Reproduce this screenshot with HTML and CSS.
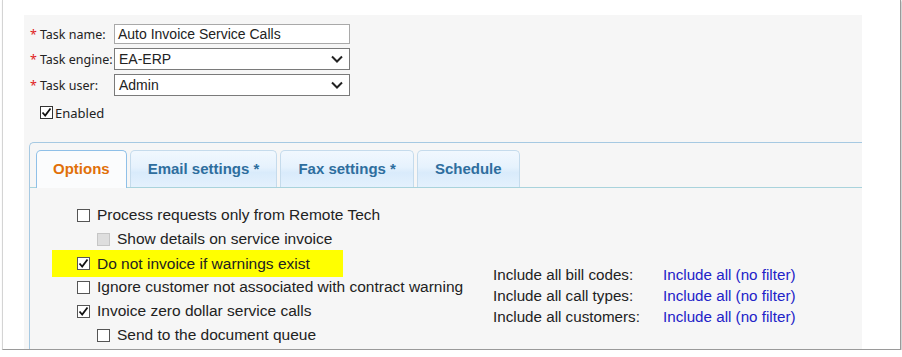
FILE: index.html
```html
<!DOCTYPE html>
<html lang="en">
<head>
    <meta charset="UTF-8">
    <title>Scheduled task</title>
    <link rel="stylesheet" href="styles.css">
</head>
<body>
    <div class="frame">
        <div class="panel">
            <div class="task-form">
                <label class="field-label"><span class="req">*</span> Task name:</label>
                <div class="text-input">Auto Invoice Service Calls</div>

                <label class="field-label"><span class="req">*</span> Task engine:</label>
                <div class="select-box">
                    <span>EA-ERP</span>
                    <svg width="12" height="8" viewBox="0 0 12 8"><path d="M1 1.5 6 6.5 11 1.5" fill="none" stroke="#222" stroke-width="2"/></svg>
                </div>

                <label class="field-label"><span class="req">*</span> Task user:</label>
                <div class="select-box">
                    <span>Admin</span>
                    <svg width="12" height="8" viewBox="0 0 12 8"><path d="M1 1.5 6 6.5 11 1.5" fill="none" stroke="#222" stroke-width="2"/></svg>
                </div>
            </div>

            <div class="enabled-row">
                <span class="cb checked"><svg width="11" height="11" viewBox="0 0 11 11"><path d="M1.5 5.5 4.2 8.5 9.5 1.5" fill="none" stroke="#111" stroke-width="1.8"/></svg></span>
                <span>Enabled</span>
            </div>

            <div class="tabs">
                <ul class="tab-nav">
                    <li class="tab active">Options</li>
                    <li class="tab">Email settings *</li>
                    <li class="tab">Fax settings *</li>
                    <li class="tab">Schedule</li>
                </ul>

                <div class="tab-panel">
                    <div class="options">
                        <div class="opt">
                            <span class="cb"></span>Process requests only from Remote Tech
                        </div>
                        <div class="opt sub">
                            <span class="cb disabled"></span>Show details on service invoice
                        </div>
                        <div class="opt marked">
                            <span class="cb checked"><svg width="11" height="11" viewBox="0 0 11 11"><path d="M1.5 5.5 4.2 8.5 9.5 1.5" fill="none" stroke="#111" stroke-width="1.8"/></svg></span>Do not invoice if warnings exist
                        </div>
                        <div class="opt">
                            <span class="cb"></span>Ignore customer not associated with contract warning
                        </div>
                        <div class="opt">
                            <span class="cb checked"><svg width="11" height="11" viewBox="0 0 11 11"><path d="M1.5 5.5 4.2 8.5 9.5 1.5" fill="none" stroke="#111" stroke-width="1.8"/></svg></span>Invoice zero dollar service calls
                        </div>
                        <div class="opt sub">
                            <span class="cb"></span>Send to the document queue
                        </div>
                    </div>

                    <div class="filters">
                        <div class="filter-row">
                            <span class="filter-label">Include all bill codes:</span>
                            <a href="#" class="filter-link">Include all (no filter)</a>
                        </div>
                        <div class="filter-row">
                            <span class="filter-label">Include all call types:</span>
                            <a href="#" class="filter-link">Include all (no filter)</a>
                        </div>
                        <div class="filter-row">
                            <span class="filter-label">Include all customers:</span>
                            <a href="#" class="filter-link">Include all (no filter)</a>
                        </div>
                    </div>
                </div>
            </div>
        </div>
    </div>
</body>
</html>
```

FILE: styles.css
```css
body {
    margin: 0;
    background-color: #fff;
    font-family: 'Liberation Sans', Arial, sans-serif;
    color: #222;
}

/* Рамка скриншота */
.frame {
    margin-left: 2px;
    width: 897px;
    height: 349px;
    border: 1px solid #d4d4d4;
    border-top: none;
    border-right-color: #9a9a9a;
    border-bottom-color: #9a9a9a;
    box-shadow: 1px 1px 2px rgba(0, 0, 0, 0.25);
    overflow: hidden;
    background-color: #fff;
}

.panel {
    margin: 15px 0 0 21px;
    width: 838px;
    height: 334px;
    background-color: #f6f6f6;
    padding: 9px 0 0 0;
    box-sizing: border-box;
    overflow: hidden;
}

/* Форма задачи */
.task-form {
    display: grid;
    grid-template-columns: 84px 236px;
    row-gap: 4px;
    padding-left: 6px;
}

.field-label {
    font-family: 'Noto Sans', sans-serif;
    font-size: 12.5px;
    display: flex;
    align-items: center;
    white-space: nowrap;
    color: #222;
}

.req {
    color: #e02020;
    margin-right: 3px;
}

.text-input {
    height: 20px;
    box-sizing: border-box;
    border: 1px solid #a9a9a9;
    background-color: #fff;
    font-size: 14px;
    line-height: 18px;
    padding-left: 3px;
}

.select-box {
    height: 22px;
    box-sizing: border-box;
    border: 1px solid #7a7a7a;
    background-color: #fff;
    font-size: 14px;
    display: flex;
    align-items: center;
    justify-content: space-between;
    padding: 0 6px 0 4px;
}

.enabled-row {
    display: flex;
    align-items: center;
    margin: 10px 0 0 16px;
    height: 13px;
    font-family: 'Noto Sans', sans-serif;
    font-size: 13px;
}

.enabled-row .cb {
    margin-right: 2px;
    border-color: #333;
}

/* Чекбоксы */
.cb {
    display: inline-flex;
    align-items: center;
    justify-content: center;
    width: 13px;
    height: 13px;
    box-sizing: border-box;
    border: 1px solid #555;
    background-color: #fff;
    flex-shrink: 0;
}

.cb.disabled {
    background-color: #dedede;
    border-color: #c6c6c6;
}

/* Вкладки */
.tabs {
    margin: 23px 0 0 5px;
    border: 1px solid #a6c9e2;
    border-right: none;
    border-top-left-radius: 5px;
    height: 300px;
}

.tab-nav {
    list-style: none;
    margin: 0;
    padding: 7px 0 0 6px;
    display: flex;
    gap: 3px;
    border-bottom: 1px solid #a9d3dc;
}

.tab {
    height: 37px;
    box-sizing: border-box;
    padding: 0 17px 2px;
    display: flex;
    align-items: center;
    font-weight: bold;
    font-size: 15px;
    color: #2e6e9e;
    border: 1px solid #c5dbec;
    border-bottom: none;
    border-radius: 5px 5px 0 0;
    background: linear-gradient(#f1f8fe 0%, #e6f2fd 45%, #d9ebfb 60%, #e4f1fd 100%);
    margin-bottom: -1px;
}

.tab.active {
    height: 38px;
    padding: 0 16px 3px;
    color: #e17009;
    background: #fbfcfd;
    border-color: #8fc0e8;
}

.tab-panel {
    display: flex;
    padding: 15px 0 0 47px;
}

.options {
    width: 416px;
}

.opt {
    display: flex;
    align-items: center;
    height: 24px;
    font-size: 15.5px;
    white-space: nowrap;
}

.opt .cb {
    margin-right: 7px;
}

.opt.sub {
    padding-left: 20px;
}

/* Выделение маркером */
.opt.marked {
    background-color: #ffff00;
    margin-left: -25px;
    padding-left: 25px;
    width: 266px;
    height: 27px;
    margin-top: -1px;
    margin-bottom: -2px;
}

.filters {
    padding-top: 61px;
}

.filter-row {
    display: flex;
    height: 21px;
    align-items: center;
    font-size: 15.2px;
}

.filter-label {
    width: 170px;
    color: #222;
}

.filter-link {
    color: #2222c8;
    text-decoration: none;
}
```
